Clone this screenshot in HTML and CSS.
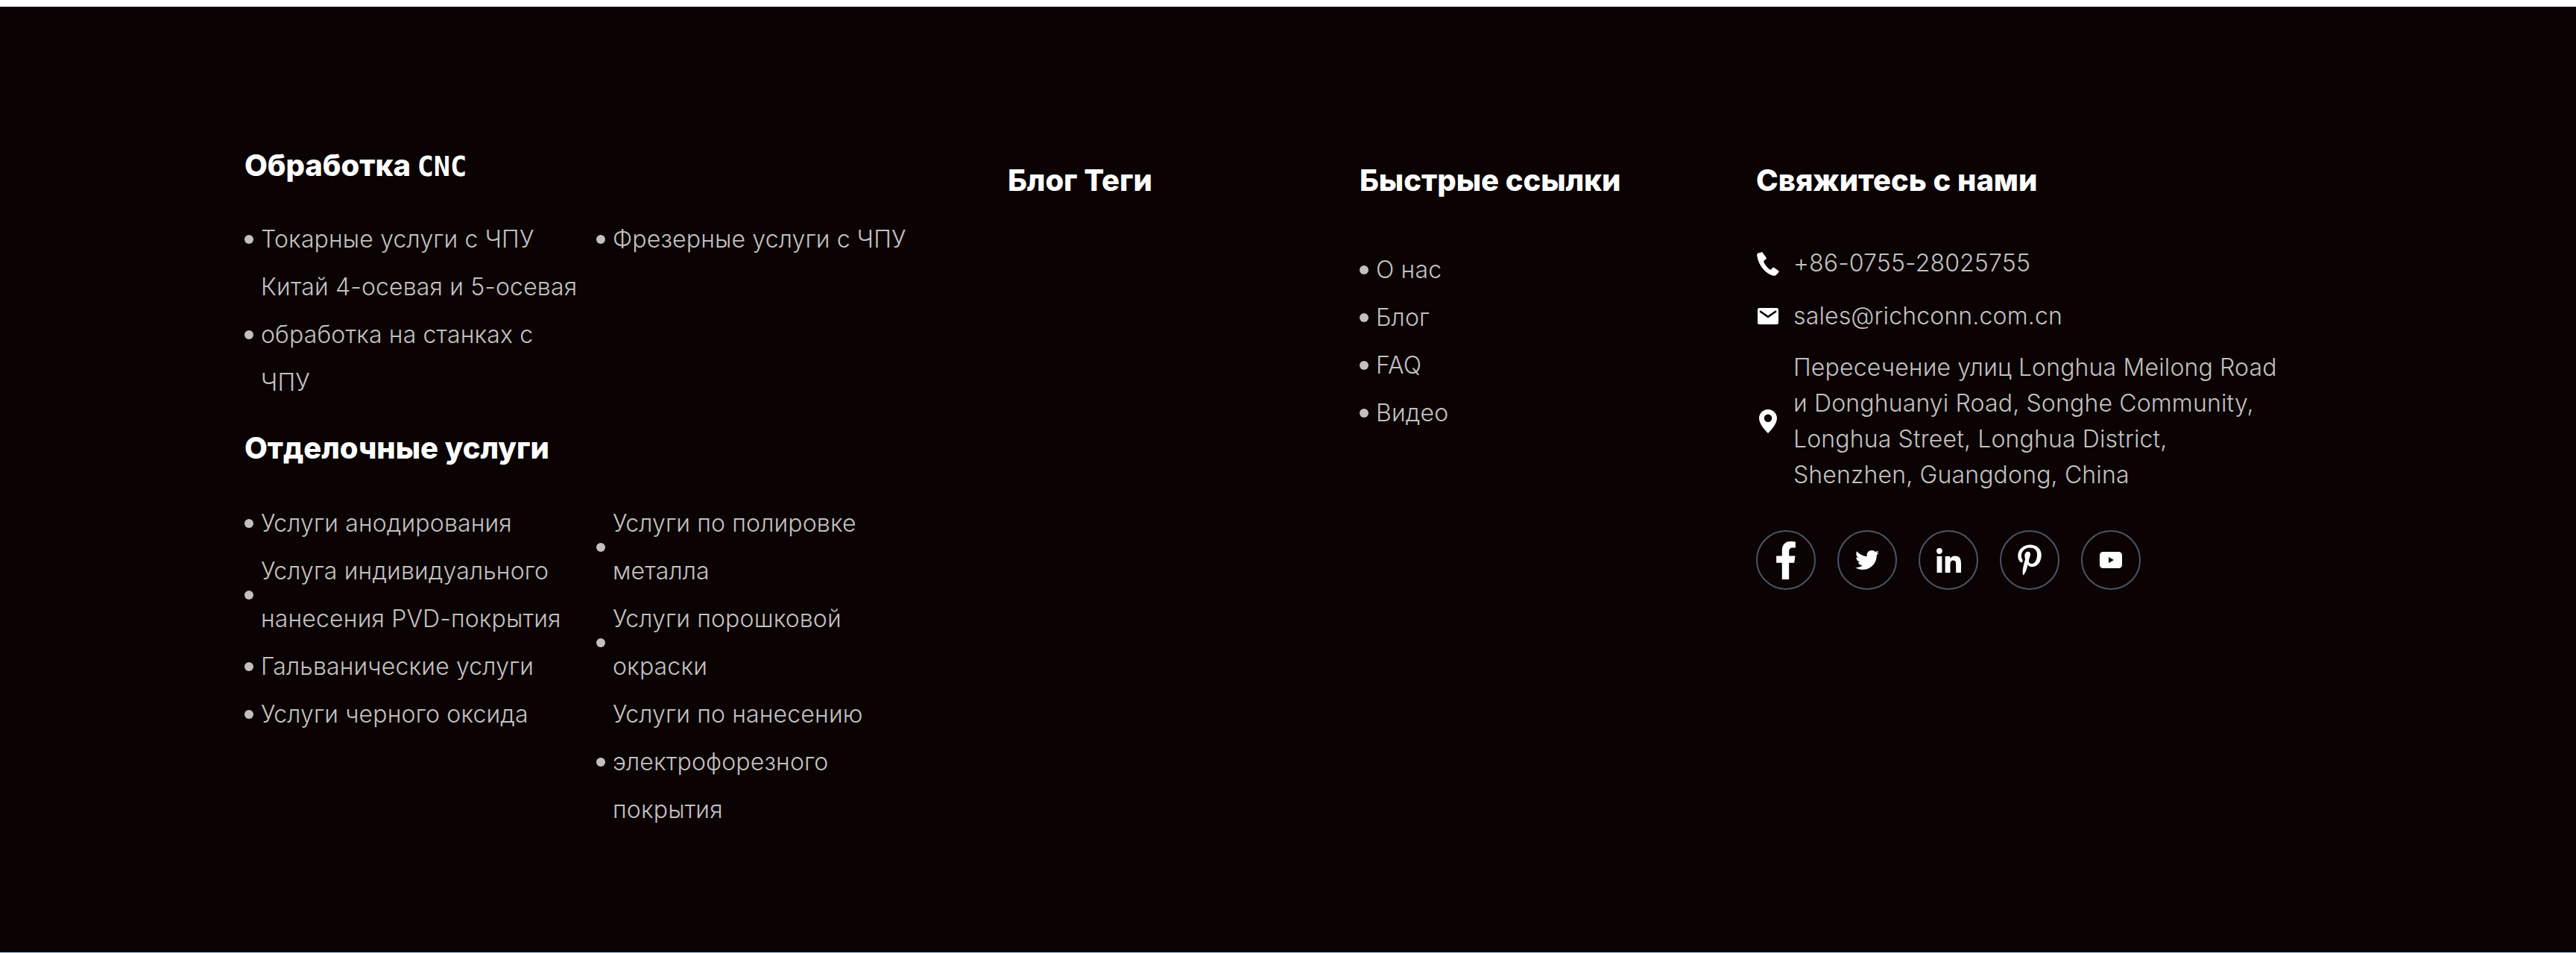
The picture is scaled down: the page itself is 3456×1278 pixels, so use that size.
FILE: index.html
```html
<!DOCTYPE html>
<html lang="ru">
  <head>
    <meta charset="UTF-8" />
    <meta name="viewport" content="width=device-width, initial-scale=1.0" />
    <title>Richconn</title>
    <link rel="stylesheet" href="styles.css">
  </head>
  <body>
    <footer class="footer">
      <div class="col col-services">
        <h3 class="title title-first">Обработка <span class="cnc">CNC</span></h3>
        <ul class="links links-two">
          <li>Токарные услуги с ЧПУ</li>
          <li>Фрезерные услуги с ЧПУ</li>
          <li>Китай 4-осевая и 5-осевая обработка на станках с ЧПУ</li>
        </ul>
        <h3 class="title title-second">Отделочные услуги</h3>
        <div class="two-lists">
          <ul class="links">
            <li>Услуги анодирования</li>
            <li>Услуга индивидуального нанесения PVD-покрытия</li>
            <li>Гальванические услуги</li>
            <li>Услуги черного оксида</li>
          </ul>
          <ul class="links">
            <li>Услуги по полировке металла</li>
            <li>Услуги порошковой окраски</li>
            <li>Услуги по нанесению электрофорезного покрытия</li>
          </ul>
        </div>
      </div>

      <div class="col col-tags">
        <h3 class="title">Блог Теги</h3>
      </div>

      <div class="col col-quick">
        <h3 class="title">Быстрые ссылки</h3>
        <ul class="links links-quick">
          <li>О нас</li>
          <li>Блог</li>
          <li>FAQ</li>
          <li>Видео</li>
        </ul>
      </div>

      <div class="col col-contact">
        <h3 class="title">Свяжитесь с нами</h3>
        <div class="contact-list">
          <div class="contact-row">
            <span class="contact-icon">
              <svg width="32" height="33" viewBox="0 0 32 33"><path fill="#fff" d="M7.2 1.2 2.7 2.6C1.3 3.2 1 4.600 1.300 6.500 2.500 13 5.600 19.700 10.300 24.700c3.700 4 7.900 6.800 12.700 8 1.600.4 3.200-.2 4.200-1.300l3-3.200c.6-.7.500-1.600-.2-2.100l-5.700-4.200c-.7-.5-1.500-.4-2.100.2l-2 2.200c-.4.400-1 .5-1.500.2-3.800-2.200-6.800-6.300-8.500-10.600-.2-.6 0-1.100.4-1.500l2.500-1.600c.7-.5 1-1.300.7-2.100L9.100 2.200C8.800 1.300 8 .9 7.200 1.200z"/></svg>
            </span>
            <span>+86-0755-28025755</span>
          </div>
          <div class="contact-row">
            <span class="contact-icon">
              <svg width="28" height="22" viewBox="0 0 28 22"><path fill="#fff" d="M2.500 0h23A2.500 2.500 0 0 1 28 2.500v17a2.500 2.500 0 0 1-2.500 2.500h-23A2.500 2.500 0 0 1 0 19.500v-17A2.500 2.500 0 0 1 2.500 0zm1.300 3.300-1.500 2L14 13.600l11.700-8.300-1.500-2L14 10.300z"/></svg>
            </span>
            <span>sales@richconn.com.cn</span>
          </div>
          <div class="contact-row">
            <span class="contact-icon">
              <svg width="24" height="32" viewBox="0 0 24 32"><path fill="#fff" fill-rule="evenodd" d="M12 0c6.600 0 12 5.200 12 11.700 0 6.800-6 14.300-12 20.300C6 26 0 18.500 0 11.700 0 5.200 5.400 0 12 0zm0 6.500a5.200 5.200 0 1 0 0 10.400 5.200 5.200 0 0 0 0-10.400z"/></svg>
            </span>
            <span class="address">Пересечение улиц Longhua Meilong Road и Donghuanyi Road, Songhe Community, Longhua Street, Longhua District, Shenzhen, Guangdong, China</span>
          </div>
        </div>
        <div class="socials">
          <a class="social">
            <svg width="30" height="51" viewBox="0 0 320 512" preserveAspectRatio="none"><path fill="#fff" d="M279.140 288l14.220-92.660h-88.910v-60.130c0-25.350 12.420-50.060 52.240-50.060h40.420V6.260S260.430 0 225.360 0c-73.220 0-121.080 44.380-121.080 124.720v70.620H22.890V288h81.390v224h100.170V288z"/></svg>
          </a>
          <a class="social">
            <svg width="32" height="32" viewBox="0 0 512 512"><path fill="#fff" d="M459.370 151.716c.325 4.548.325 9.097.325 13.645 0 138.720-105.583 298.558-298.558 298.558-59.452 0-114.680-17.219-161.137-47.106 8.447.974 16.568 1.299 25.340 1.299 49.055 0 94.213-16.568 130.274-44.832-46.132-.975-84.792-31.188-98.112-72.772 6.498.974 12.995 1.624 19.818 1.624 9.421 0 18.843-1.300 27.614-3.573-48.081-9.747-84.143-51.980-84.143-102.985v-1.299c13.969 7.797 30.214 12.670 47.431 13.319-28.264-18.843-46.781-51.005-46.781-87.391 0-19.492 5.197-37.360 14.294-52.954 51.655 63.675 129.300 105.258 216.365 109.807-1.624-7.797-2.599-15.918-2.599-24.040 0-57.828 46.782-104.934 104.934-104.934 30.213 0 57.502 12.670 76.670 33.137 23.715-4.548 46.456-13.320 66.599-25.340-7.798 24.366-24.366 44.833-46.132 57.827 21.117-2.273 41.584-8.122 60.426-16.243-14.292 20.791-32.161 39.308-52.628 54.253z"/></svg>
          </a>
          <a class="social">
            <svg width="33" height="33" viewBox="0 0 448 448"><path fill="#fff" d="M100.280 448H7.400V148.900h92.880zM53.790 108.100C24.090 108.100 0 83.500 0 53.800a53.790 53.790 0 0 1 107.580 0c0 29.700-24.100 54.300-53.790 54.300zM447.900 448h-92.680V302.400c0-34.700-.7-79.200-48.290-79.200-48.290 0-55.690 37.700-55.690 76.700V448h-92.780V148.900h89.080v40.800h1.300c12.400-23.500 42.690-48.300 87.880-48.300 94 0 111.280 61.900 111.280 142.300V448z"/></svg>
          </a>
          <a class="social">
            <svg width="32" height="42" viewBox="0 0 384 512"><path fill="#fff" d="M204 6.500C101.400 6.500 0 74.900 0 185.600 0 256 39.600 296 63.600 296c9.900 0 15.600-27.600 15.600-35.400 0-9.300-23.700-29.100-23.700-67.800 0-80.400 61.200-137.400 140.400-137.400 68.100 0 118.500 38.700 118.500 109.800 0 53.100-21.300 152.700-90.300 152.700-24.900 0-46.200-18-46.200-43.800 0-37.800 26.400-74.400 26.400-113.400 0-66.200-93.900-54.200-93.900 25.800 0 16.800 2.100 35.400 9.600 50.700-13.800 59.400-42 147.900-42 209.100 0 18.900 2.700 37.500 4.500 56.400 3.400 3.800 1.700 3.400 6.900 1.500 50.400-69 48.600-82.500 71.400-172.800 12.300 23.400 44.100 36 69.300 36 106.200 0 153.900-103.500 153.900-196.800C384 71.300 298.200 6.500 204 6.500z"/></svg>
          </a>
          <a class="social">
            <svg width="30" height="22" viewBox="0 0 30 22"><path fill="#fff" fill-rule="evenodd" d="M4.500 0h21A4.500 4.500 0 0 1 30 4.500v13a4.500 4.500 0 0 1-4.500 4.500h-21A4.500 4.500 0 0 1 0 17.500v-13A4.500 4.500 0 0 1 4.500 0zM12 7v8l7-4z"/></svg>
          </a>
        </div>
      </div>
    </footer>
  </body>
</html>
```

FILE: styles.css
```css
* {
  padding: 0;
  margin: 0;
  box-sizing: border-box;
}

body {
  font-family: Inter, "Noto Sans", sans-serif;
  background-color: #fff;
  padding-top: 9px;
}

.footer {
  display: grid;
  grid-template-columns: 1024px 472px 532px 1fr;
  height: 1269px;
  padding: 206px 0 0 328px;
  background-color: #0a0203;
  border-bottom: 1px solid #a8d4f0;
  color: #c4c0c0;
  font-size: 32px;
  font-weight: 300;
  letter-spacing: 0.15px;
}

.title {
  color: #fff;
  font-size: 40px;
  font-weight: 800;
  line-height: 54px;
  letter-spacing: -0.05px;
}

.title-first {
  margin-top: -20px;
}

.title-second {
  margin-top: 29px;
}

.cnc {
  font-family: "DejaVu Sans Mono", monospace;
  font-size: 37px;
}

.links {
  list-style: none;
  width: 456px;
}

.links li {
  display: flex;
  align-items: center;
  gap: 10px;
  line-height: 64px;
}

.links li::before {
  content: "";
  flex: none;
  width: 12px;
  height: 12px;
  border-radius: 50%;
  background-color: #c4c0c0;
}

.links-two {
  display: grid;
  grid-template-columns: 472px 472px;
  width: 944px;
  margin-top: 38px;
}

.links-two li {
  width: 456px;
}

.links-two li:nth-child(3) {
  grid-column: 1;
}

.two-lists {
  display: grid;
  grid-template-columns: 472px 472px;
  margin-top: 42px;
}

.links-quick {
  margin-top: 61px;
}

.contact-list {
  margin-top: 60px;
  display: flex;
  flex-direction: column;
  gap: 23px;
}

.contact-row {
  display: flex;
  align-items: center;
  gap: 18px;
  line-height: 48px;
}

.contact-row + .contact-row + .contact-row {
  margin-top: -2px;
}

.contact-icon {
  flex: none;
  display: flex;
  align-items: center;
  justify-content: center;
  width: 32px;
}

.address {
  width: 660px;
}

.socials {
  display: flex;
  gap: 29px;
  margin-top: 50px;
}

.social {
  display: flex;
  align-items: center;
  justify-content: center;
  width: 80px;
  height: 80px;
  border: 2px solid #4b5563;
  border-radius: 50%;
}
```
